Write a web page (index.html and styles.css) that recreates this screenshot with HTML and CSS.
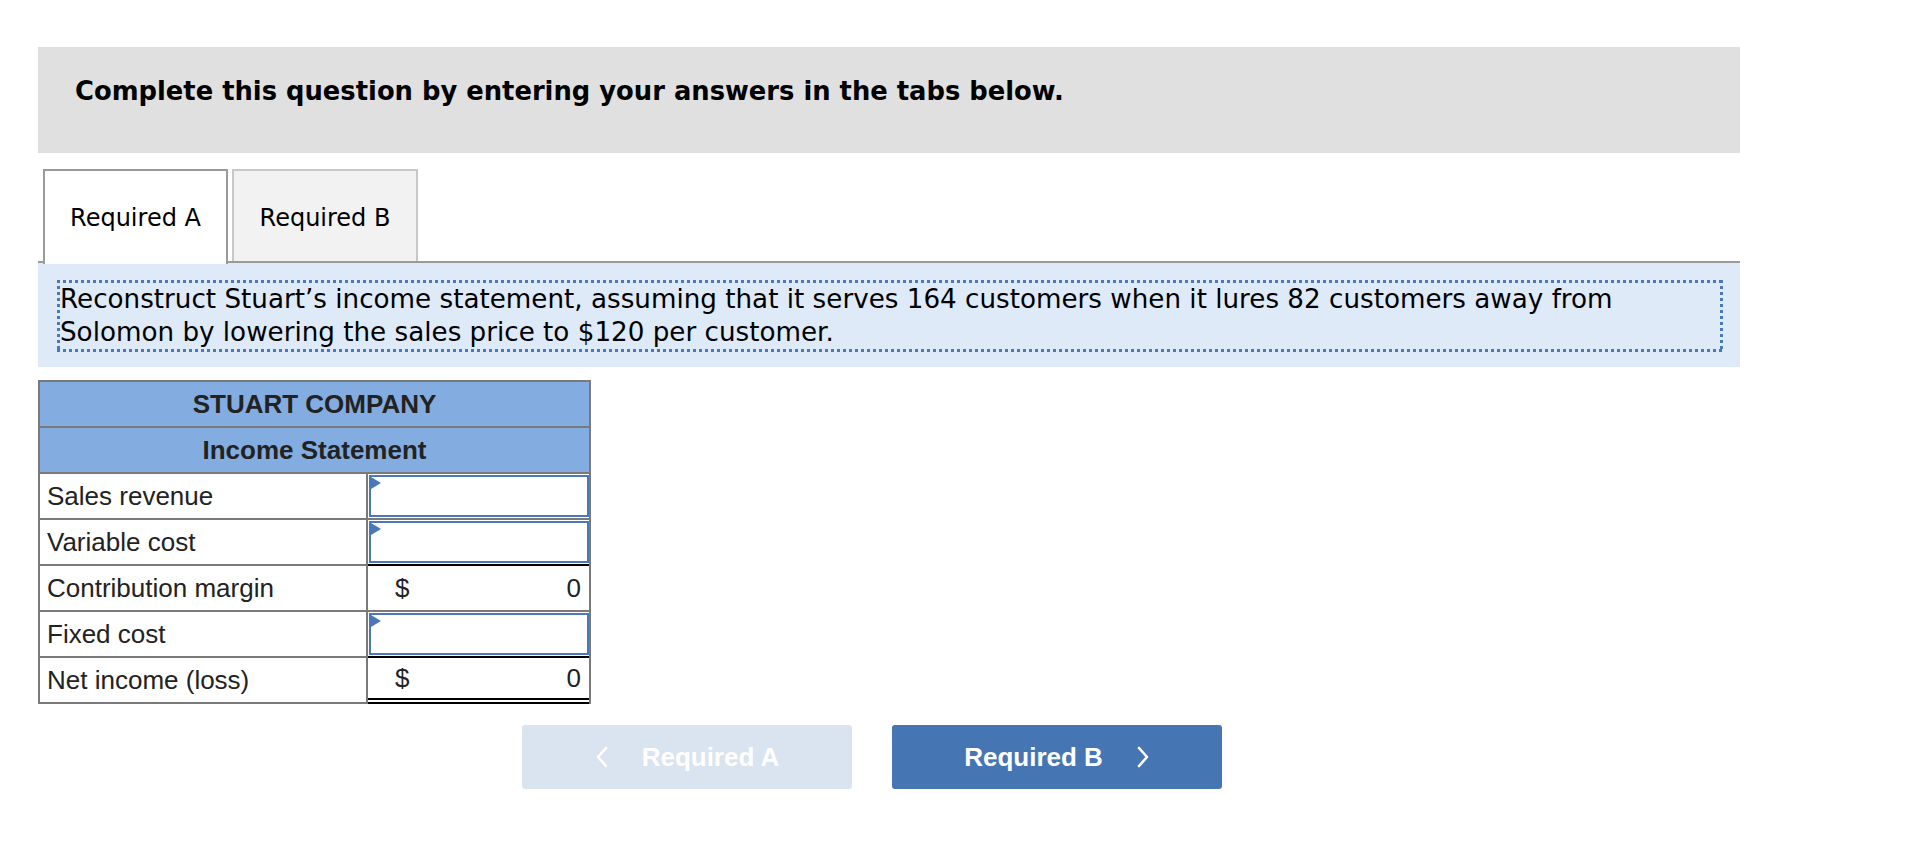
FILE: index.html
```html
<!DOCTYPE html>
<html lang="en">
<head>
<meta charset="utf-8">
<title>Required A</title>
<link rel="stylesheet" href="styles.css">
</head>
<body>
<div class="page">
  <div class="banner">Complete this question by entering your answers in the tabs below.</div>

  <div class="tabs">
    <div class="tab active">Required A</div>
    <div class="tab">Required B</div>
  </div>

  <div class="prompt">
    <div class="dotbox">Reconstruct Stuart’s income statement, assuming that it serves 164 customers when it lures 82 customers away from Solomon by lowering the sales price to $120 per customer.</div>
  </div>

  <div class="stmt">
    <div class="head">STUART COMPANY</div>
    <div class="head">Income Statement</div>
    <div class="row">
      <div class="label">Sales revenue</div>
      <div class="val"><div class="input"></div></div>
    </div>
    <div class="row">
      <div class="label">Variable cost</div>
      <div class="val blk"><div class="input"></div></div>
    </div>
    <div class="row">
      <div class="label">Contribution margin</div>
      <div class="val calc"><span>$</span><span>0</span></div>
    </div>
    <div class="row">
      <div class="label">Fixed cost</div>
      <div class="val blk"><div class="input"></div></div>
    </div>
    <div class="row">
      <div class="label">Net income (loss)</div>
      <div class="val calc total"><span>$</span><span>0</span></div>
    </div>
  </div>

  <div class="nav">
    <div class="btn prev">
      <svg class="chev" width="14" height="22" viewBox="0 0 14 22"><polyline points="11,2 3,11 11,20" fill="none" stroke="#fff" stroke-width="2.6" stroke-linecap="round" stroke-linejoin="round"/></svg>
      <span>Required A</span>
    </div>
    <div class="btn next">
      <span>Required B</span>
      <svg class="chev" width="14" height="22" viewBox="0 0 14 22"><polyline points="3,2 11,11 3,20" fill="none" stroke="#fff" stroke-width="2.6" stroke-linecap="round" stroke-linejoin="round"/></svg>
    </div>
  </div>
</div>
</body>
</html>
```
FILE: styles.css
```css
html, body {
  margin: 0;
  padding: 0;
  background: #fff;
}

.page {
  width: 1702px;
  margin: 47px 0 0 38px;
  font-family: "DejaVu Sans", Verdana, sans-serif;
  color: #000;
}

.banner {
  height: 106px;
  box-sizing: border-box;
  background: #e0e0e0;
  padding: 28px 0 0 37px;
  font-weight: bold;
  font-size: 25.8px;
  line-height: 32px;
}

.tabs {
  display: flex;
  gap: 4px;
  margin-top: 16px;
  padding-left: 5px;
  height: 94px;
  box-sizing: border-box;
  border-bottom: 2px solid #9a9a9a;
  align-items: flex-end;
}

.tab {
  width: 186px;
  height: 92px;
  box-sizing: border-box;
  border: 2px solid #c8c8c8;
  border-bottom: none;
  background: #f2f2f2;
  display: flex;
  align-items: center;
  justify-content: center;
  font-size: 24px;
  padding-top: 3px;
}

.tab.active {
  width: 185px;
  height: 95px;
  margin-bottom: -3px;
  padding-top: 0;
  border-color: #9a9a9a;
  background: #fff;
}

.prompt {
  background: #deeaf8;
  padding: 17px 17px 15px 19px;
}

.dotbox {
  padding: 3px 3px 3px 3px;
  font-size: 26.2px;
  line-height: 33px;
  background:
    repeating-linear-gradient(90deg, #4a78b8 0 3px, transparent 3px 6px) top left / 100% 3px no-repeat,
    repeating-linear-gradient(90deg, #4a78b8 0 3px, transparent 3px 6px) bottom left / 100% 3px no-repeat,
    repeating-linear-gradient(180deg, #4a78b8 0 3px, transparent 3px 6px) top left / 3px 100% no-repeat,
    repeating-linear-gradient(180deg, #4a78b8 0 3px, transparent 3px 6px) top right / 3px 100% no-repeat;
}

.stmt {
  margin-top: 13px;
  width: 553px;
  box-sizing: border-box;
  border: 2px solid #7a7a7a;
  border-bottom: none;
  font-family: "Liberation Sans", Arial, sans-serif;
  font-size: 26px;
  color: #222;
}

.head {
  height: 44px;
  border-bottom: 2px solid #7a7a7a;
  background: #83ace0;
  font-weight: bold;
  display: flex;
  align-items: center;
  justify-content: center;
}

.row {
  display: flex;
  height: 46px;
}

.label {
  width: 328px;
  box-sizing: border-box;
  border-right: 2px solid #7a7a7a;
  border-bottom: 2px solid #7a7a7a;
  display: flex;
  align-items: center;
  padding-left: 7px;
}

.val {
  flex: 1;
  border-bottom: 2px solid #7a7a7a;
  display: flex;
}

.val.blk {
  border-bottom-color: #000;
}

.input {
  position: relative;
  flex: 1;
  margin: 1px 0 1px 1px;
  border: 2px solid #4a78b8;
  background: #fff;
}

.input::before {
  content: "";
  position: absolute;
  left: 0;
  top: 0;
  border-left: 10px solid #4a78b8;
  border-top: 6px solid transparent;
  border-bottom: 6px solid transparent;
}

.calc {
  align-items: center;
  justify-content: space-between;
  padding: 0 8px 0 27px;
}

.calc.total {
  border-bottom: 6px double #000;
  height: 40px;
}

.nav {
  display: flex;
  gap: 40px;
  margin: 21px 0 0 484px;
  font-family: "Liberation Sans", Arial, sans-serif;
  font-weight: bold;
  font-size: 26px;
  color: #fff;
}

.btn {
  width: 330px;
  height: 64px;
  border-radius: 3px;
  display: flex;
  align-items: center;
  justify-content: center;
  gap: 33px;
}

.btn.prev {
  background: #dae3f0;
}

.btn.next {
  background: #4675b4;
}

.chev {
  display: block;
}
```
